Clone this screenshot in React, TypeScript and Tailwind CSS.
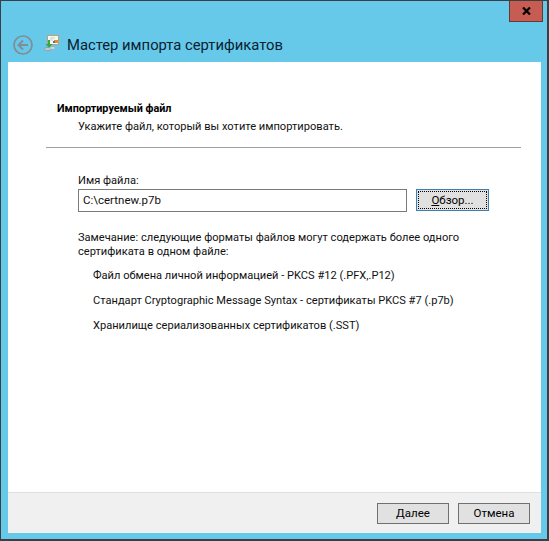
function CertIcon() {
  return (
    <svg width="16" height="16" viewBox="0 0 16 16" className="shrink-0">
      <rect x="3.5" y="0.5" width="11" height="9" fill="#fbf6e6" stroke="#b9a27a" />
      <rect x="10" y="5" width="4" height="3" fill="#e0902c" />
      <rect x="9" y="6" width="2" height="2" fill="#3b78c4" />
      <path d="M6 3h5M6 5h3" stroke="#c4ccd6" />
      <path d="M4 5v4H1.5L5 13l3.5-4H6V5z" fill="#3aa544" />
      <ellipse cx="4" cy="14" rx="3.8" ry="1.5" fill="#c9cfd4" stroke="#7f8a92" strokeWidth="0.6" />
      <ellipse cx="8.5" cy="13" rx="3" ry="1.2" fill="#e2e6e8" stroke="#8f989e" strokeWidth="0.6" />
    </svg>
  );
}

function BackIcon() {
  return (
    <svg width="20" height="20" viewBox="0 0 20 20" className="shrink-0">
      <circle cx="10" cy="10" r="9" fill="none" stroke="#7f8d95" strokeWidth="1.7" />
      <path d="M15 10H6M10 5.5 5.5 10l4.5 4.5" fill="none" stroke="#7f8d95" strokeWidth="2" />
    </svg>
  );
}

function Btn({ children, focused }: { children: React.ReactNode; focused?: boolean }) {
  return (
    <button
      className={
        focused
          ? 'w-[73px] h-[22px] bg-[#e1e1e1] border border-[#3c7fb1] text-[11.5px] text-black p-px'
          : 'w-[72px] h-[21px] bg-[#e1e1e1] border border-[#707070] text-[11.5px] text-black'
      }
    >
      {focused ? (
        <span className="flex h-full items-center justify-center border border-dotted border-black">{children}</span>
      ) : (
        children
      )}
    </button>
  );
}

export default function App() {
  return (
    <div
      className="w-[549px] h-[541px] bg-[#67c9ea] border-t border-l border-r-2 border-b-2 border-[#3a3f44] flex flex-col relative overflow-hidden"
      style={{ fontFamily: 'Roboto, "Noto Sans", sans-serif' }}
    >
      {/* 닫기 버튼 */}
      <div className="absolute top-0 right-[4px] w-[34px] h-[21px] bg-[#c75c52] border-x border-b border-[#5e3a38] flex items-center justify-center">
        <svg width="9" height="8" viewBox="0 0 9 8">
          <path d="M1 0.5 8 7.5M8 0.5 1 7.5" stroke="#000" strokeWidth="2.2" />
        </svg>
      </div>

      <div className="h-[61px] flex items-end pb-[7px] pl-[12px] shrink-0">
        <BackIcon />
        <div className="ml-[11px] mb-[4px]"><CertIcon /></div>
        <h1 className="ml-[7px] text-[14.8px] leading-[20px] text-[#0a2230]">Мастер импорта сертификатов</h1>
      </div>

      <div className="ml-[7px] mr-[6px] mb-[6px] flex-1 flex flex-col bg-white text-[11.1px] text-[#111] leading-[15px]">
        <div className="flex-1">
          <div className="pt-[39px] pl-[49px] font-bold text-[10.8px] text-black">Импортируемый файл</div>
          <div className="pt-[3px] pl-[70px]">Укажите файл, который вы хотите импортировать.</div>
          <div className="mt-[13px] ml-[38px] mr-[20px] h-px bg-[#a0a0a0]" />

          <div className="pt-[25px] pl-[70px]">
            <div>Имя файла:</div>
            <div className="mt-[1px] flex items-start gap-[9px]">
              <div className="w-[329px] h-[23px] border border-[#7a7a7a] flex items-center pl-[4px] text-[11.5px]">C:\certnew.p7b</div>
              <Btn focused><span><u>О</u>бзор...</span></Btn>
            </div>
            <p className="mt-[19px] w-[400px] leading-[14px]">Замечание: следующие форматы файлов могут содержать более одного сертификата в одном файле:</p>
            <div className="pl-[15px] mt-[9px] flex flex-col gap-[10px]">
              <div>Файл обмена личной информацией - PKCS #12 (.PFX,.P12)</div>
              <div>Стандарт Cryptographic Message Syntax - сертификаты PKCS #7 (.p7b)</div>
              <div>Хранилище сериализованных сертификатов (.SST)</div>
            </div>
          </div>
        </div>

        <div className="h-[41px] bg-[#f0f0f0] border-t border-[#dfdfdf] flex items-center justify-end gap-[9px] pr-[11px]">
          <Btn><span><u>Д</u>алее</span></Btn>
          <Btn>Отмена</Btn>
        </div>
      </div>
    </div>
  );
}
